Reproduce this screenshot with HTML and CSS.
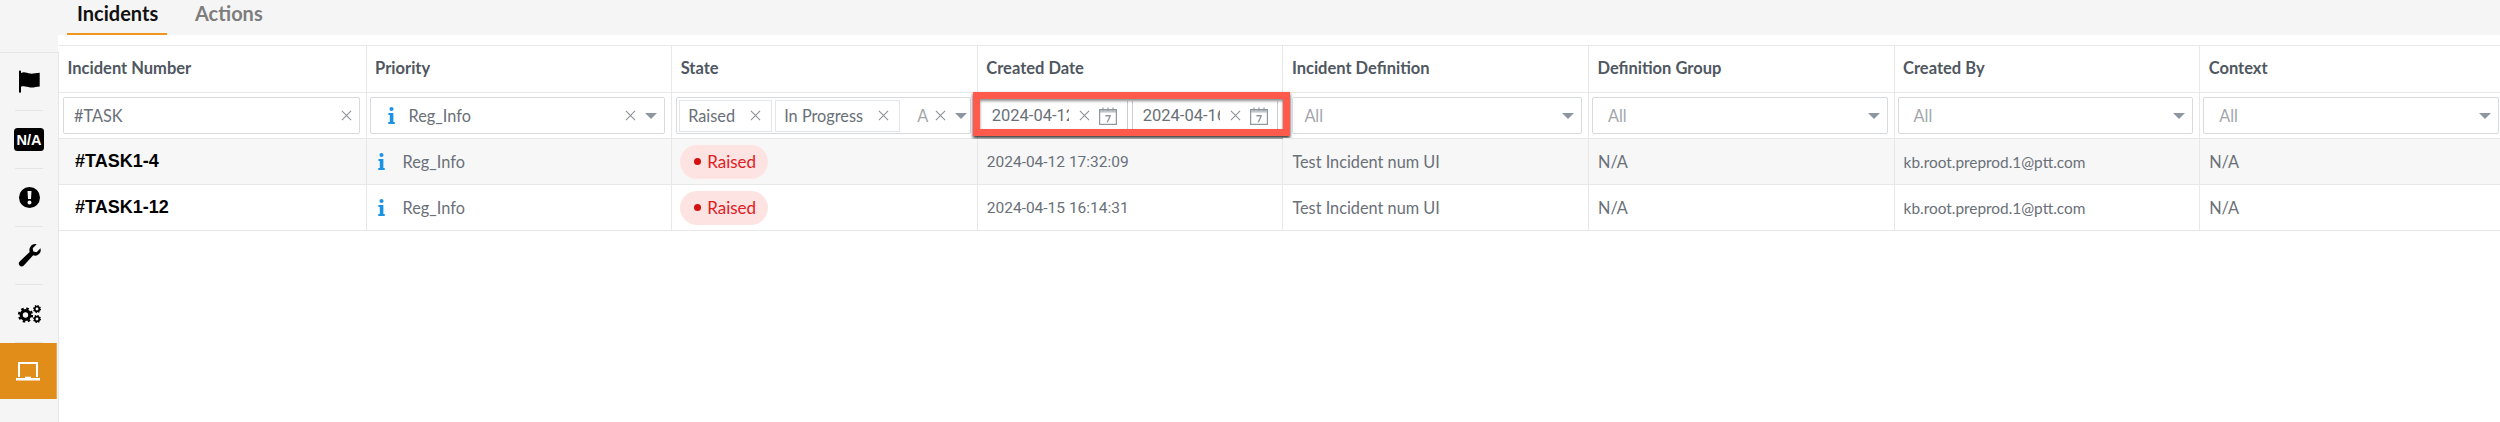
FILE: index.html
```html
<!DOCTYPE html>
<html lang="en">
<head>
<meta charset="utf-8">
<title>Incidents</title>
<link rel="stylesheet" href="styles.css">
</head>
<body>
<svg class="defs" width="0" height="0" aria-hidden="true">
  <symbol id="i-info" viewBox="0 0 8 20"><circle cx="4" cy="2.400" r="2.400"/><path d="M.4 7h5.800v10.600h1.600V20H.2v-2.400h1.800V9.400H.4z"/></symbol>
  <symbol id="i-x" viewBox="0 0 12 12"><path d="M1 1l10 10M11 1L1 11" fill="none" stroke="currentColor" stroke-width="1.200"/></symbol>
  <symbol id="i-cal" viewBox="0 0 18 18"><path d="M.6 2.600h16.800v14.800H.6z" fill="none" stroke="currentColor" stroke-width="1.200"/><path d="M.6 2.600h16.800v3H.6z" fill="currentColor" opacity=".55"/><path d="M4 .4v3.400M9 .4v3.400M14 .4v3.400" stroke="currentColor" stroke-width="1.200"/><path d="M6.400 8h5.400v1.200l-2.800 6H7.500l2.700-5.800H6.400z" fill="currentColor"/></symbol>
</svg>
<header class="tabs">
  <a class="tab tab-active">Incidents</a>
  <a class="tab">Actions</a>
</header>
<div class="workspace">
  <nav class="sidebar">
    <div class="side-item">
      <svg class="side-icon" width="23" height="23" viewBox="0 0 23 23"><path d="M1 1.500c0-1.200 2-1.200 2 0V3c3.500-1.600 6 .3 9 .6 3.400.3 6-.8 9.700-.8v13.600c-3.500.2-6 1.400-9.700 1-3.200-.4-5.700-1.900-9-.6v5.200c0 1-2 1-2 0z"/></svg>
    </div>
    <div class="side-sep"></div>
    <div class="side-item">
      <svg class="side-icon" width="30" height="23" viewBox="0 0 30 23"><rect width="30" height="23" rx="3.500"/><text x="15" y="16.800" class="na-text" text-anchor="middle">N/A</text></svg>
    </div>
    <div class="side-sep"></div>
    <div class="side-item">
      <svg class="side-icon" width="21" height="21" viewBox="0 0 21 21"><path fill-rule="evenodd" d="M10.500 0a10.500 10.500 0 1 1 0 21 10.500 10.500 0 0 1 0-21zM8.500 4l.5 8h3l.5-8zm2 9.500a2 2 0 1 0 0 4 2 2 0 0 0 0-4z"/></svg>
    </div>
    <div class="side-sep"></div>
    <div class="side-item">
      <svg class="side-icon" width="23" height="23" viewBox="0 0 23 23"><path d="M22.500 4.300c.7 2.700-.2 5.200-2.400 6.500-1.700 1-3.400 1-4.900.5L5.800 21.500c-1.100 1.200-3 1.300-4.200.1-1.200-1.200-1.100-3 .1-4.200l10-9.500c-.6-1.700-.4-3.500.6-5C13.600.6 16.200-.4 18.700.3l-4 4 .6 3.300 3.300.7z"/></svg>
    </div>
    <div class="side-sep"></div>
    <div class="side-item">
      <svg class="gears" width="23" height="18" viewBox="0 0 23 18">
        <circle cx="7.500" cy="10" r="4.300" stroke-width="3.200"/>
        <circle cx="7.500" cy="10" r="6.500" stroke-width="2.200" stroke-dasharray="2.550 2.550"/>
        <circle cx="19" cy="4" r="2.300" stroke-width="1.800"/>
        <circle cx="19" cy="4" r="3.300" stroke-width="1.400" stroke-dasharray="1.300 1.300"/>
        <circle cx="19" cy="14" r="2.300" stroke-width="1.800"/>
        <circle cx="19" cy="14" r="3.300" stroke-width="1.400" stroke-dasharray="1.300 1.300"/>
      </svg>
    </div>
    <div class="side-sep"></div>
    <div class="side-item side-active">
      <svg class="side-icon side-icon-light" width="24" height="19" viewBox="0 0 24 19"><path d="M3 1h18v14" fill="none" stroke="currentColor" stroke-width="2"/><path d="M3 0v15" stroke="currentColor" stroke-width="2"/><path d="M0 16h9v-1.300h6V16h9v2.400H0z"/></svg>
    </div>
  </nav>
  <main class="main">
    <div class="grid">
      <div class="cell head">Incident Number</div>
      <div class="cell head">Priority</div>
      <div class="cell head">State</div>
      <div class="cell head">Created Date</div>
      <div class="cell head">Incident Definition</div>
      <div class="cell head">Definition Group</div>
      <div class="cell head">Created By</div>
      <div class="cell head">Context</div>

      <div class="cell filter filter-first">
        <div class="field"><span class="value grow">#TASK</span><svg class="x"><use href="#i-x"/></svg></div>
      </div>
      <div class="cell filter">
        <div class="field">
          <svg class="info info-filter"><use href="#i-info"/></svg>
          <span class="value grow">Reg_Info</span>
          <svg class="x"><use href="#i-x"/></svg><span class="caret"></span>
        </div>
      </div>
      <div class="cell filter filter-first">
        <div class="field field-chips">
          <span class="chip chip-a"><span class="value">Raised</span><svg class="x"><use href="#i-x"/></svg></span>
          <span class="chip chip-b"><span class="value">In Progress</span><svg class="x"><use href="#i-x"/></svg></span>
          <span class="chip-rest">A</span>
          <svg class="x"><use href="#i-x"/></svg><span class="caret"></span>
        </div>
      </div>
      <div class="cell filter filter-date">
        <div class="date">
          <span class="date-text">2024-04-12</span><svg class="x"><use href="#i-x"/></svg><svg class="cal"><use href="#i-cal"/></svg>
        </div>
        <div class="date date-end">
          <span class="date-text">2024-04-16</span><svg class="x"><use href="#i-x"/></svg><svg class="cal"><use href="#i-cal"/></svg>
        </div>
        <div class="callout"></div>
      </div>
      <div class="cell filter filter-inset"><div class="field"><span class="hint grow">All</span><span class="caret"></span></div></div>
      <div class="cell filter"><div class="field"><span class="hint grow">All</span><span class="caret"></span></div></div>
      <div class="cell filter"><div class="field"><span class="hint grow">All</span><span class="caret"></span></div></div>
      <div class="cell filter"><div class="field"><span class="hint grow">All</span><span class="caret"></span></div></div>

      <div class="cell row alt num">#TASK1-4</div>
      <div class="cell row alt"><svg class="info"><use href="#i-info"/></svg><span>Reg_Info</span></div>
      <div class="cell row alt row-pill"><span class="pill"><span class="dot"></span>Raised</span></div>
      <div class="cell row alt stamp">2024-04-12 17:32:09</div>
      <div class="cell row alt">Test Incident num UI</div>
      <div class="cell row alt">N/A</div>
      <div class="cell row alt mail">kb.root.preprod.1@ptt.com</div>
      <div class="cell row alt">N/A</div>

      <div class="cell row num">#TASK1-12</div>
      <div class="cell row"><svg class="info"><use href="#i-info"/></svg><span>Reg_Info</span></div>
      <div class="cell row row-pill"><span class="pill"><span class="dot"></span>Raised</span></div>
      <div class="cell row stamp">2024-04-15 16:14:31</div>
      <div class="cell row">Test Incident num UI</div>
      <div class="cell row">N/A</div>
      <div class="cell row mail">kb.root.preprod.1@ptt.com</div>
      <div class="cell row">N/A</div>
    </div>
  </main>
</div>
</body>
</html>
```
FILE: styles.css
```css
* { box-sizing: border-box; }
html, body { margin: 0; height: 422px; overflow: hidden; background: #fff; }
body {
  font-family: Lato, "Open Sans", sans-serif;
  font-size: 16.300px;
  color: #6a7078;
  display: flex;
  flex-direction: column;
}
.defs { position: absolute; }

.tabs {
  height: 35px;
  flex: none;
  background: #f5f5f5;
  display: flex;
  padding-left: 67px;
  gap: 28px;
  font-size: 20px;
  font-weight: 700;
  color: #7d7d7d;
}
.tab { height: 35px; line-height: 26px; }
.tab-active { color: #111; border-bottom: 2px solid #ee961e; width: 100px; padding-left: 10px; }

.workspace { flex: 1; display: flex; min-height: 0; }
.sidebar {
  width: 59px;
  flex: none;
  margin-top: 17px;
  border-top: 1px solid #e6e6e6;
  border-right: 1px solid #e6e6e6;
  background: #f5f5f5;
  display: flex;
  flex-direction: column;
  position: relative;
}
.sidebar::before {
  content: "";
  position: absolute;
  left: 0; right: 0; top: -18px; height: 17px;
  background: #f5f5f5;
}
.side-item {
  height: 57px;
  display: flex;
  align-items: center;
  justify-content: center;
  flex: none;
}
.side-sep { height: 1px; width: 28px; margin-left: 15px; background: #e4e4e4; flex: none; }
.side-icon { fill: #000; display: block; }
.gears { display: block; fill: none; stroke: #000; }
.na-text { font: 700 14.500px "Liberation Sans", sans-serif; fill: #fff; }
.side-active { background: #e08d1a; width: 57px; height: 56px; border-right: 1px solid #e8a84f; }
.side-icon-light { fill: #fff; color: #fff; }

.main { flex: 1; min-width: 0; padding-top: 10px; overflow: hidden; }
.grid {
  display: grid;
  width: 2447px;
  grid-template-columns: 307.600px repeat(7, 305.600px);
  grid-template-rows: 47px 46px 46px 46px;
  border-top: 1px solid #e8e8e8;
}
.cell {
  border-right: 1px solid #e8e8e8;
  border-bottom: 1px solid #e8e8e8;
  display: flex;
  align-items: center;
  min-width: 0;
  position: relative;
}
.head { padding-left: 8.500px; font-weight: 700; color: #4f5761; font-size: 16.500px; padding-bottom: 2px; }
.filter { padding: 0 6px 0 3px; }
.filter-first { padding-left: 4px; }
.filter-inset { padding-left: 9px; }
.filter-inset .hint { padding-left: 1px; }
.row { padding-left: 9px; }
.row-pill { padding-left: 8px; }
.stamp { font-family: Roboto, sans-serif; font-size: 15.500px; }
.mail { font-size: 15.400px; }
.alt { background: #f7f7f7; }
.num { padding-left: 16px; font-weight: 700; color: #000; font-size: 18px; font-family: "Liberation Sans", sans-serif; }

.field {
  width: 100%;
  height: 37px;
  border: 1px solid #d8dbde;
  border-radius: 2px;
  background: #fff;
  display: flex;
  align-items: center;
  padding: 0 7px 0 10px;
}
.grow { flex: 1; min-width: 0; }
.value { color: #6a7078; }
.hint { color: #a2a6ab; padding-left: 5px; }
.x { width: 11px; height: 11px; color: #8d9298; flex: none; }
.caret {
  width: 0; height: 0; flex: none;
  border-left: 6px solid transparent;
  border-right: 6px solid transparent;
  border-top: 6px solid #8e97a1;
  margin-left: 9px;
}

.info { width: 7px; height: 17px; fill: #1a92e8; flex: none; margin-left: 2px; margin-right: 18px; }
.info-filter { margin-left: 7px; margin-right: 14px; }

.field-chips { padding: 0 7px 0 2px; }
.chip {
  height: 32px;
  display: flex;
  align-items: center;
  justify-content: space-between;
  border: 1px solid #e4e6e8;
  padding: 0 10px 0 8px;
  margin-right: 3px;
  flex: none;
}
.chip-a { width: 93px; }
.chip-b { width: 125px; }
.chip-rest { color: #a2a6ab; width: 32px; padding-left: 14px; overflow: hidden; flex: none; }

.filter-date { padding: 0 0 0 3px; }
.date {
  width: 147px;
  height: 29px;
  display: flex;
  align-items: center;
  padding-left: 11px;
  border-right: 1px solid #c9ccd0;
  background: #fff;
  flex: none;
  font-family: Roboto, sans-serif;
  font-size: 16.500px;
}
.date-end { width: 146px; margin-left: 4px; padding-left: 10px; border-left: 1px solid #c9ccd0; }
.date-text { width: 77px; overflow: hidden; white-space: nowrap; color: #6a7078; margin-right: 10px; flex: none; }
.date .x { margin-right: 9px; }
.cal { width: 18px; height: 18px; color: #8f979f; flex: none; }
.callout {
  position: absolute;
  left: -5px; top: -1px;
  width: 317px; height: 44px;
  border: 7px solid #ff5a4c;
  box-shadow: 0 2px 3px rgba(0,0,0,.8), inset 0 2px 3px rgba(0,0,0,.45);
  pointer-events: none;
}

.pill {
  height: 34px;
  width: 88px;
  border-radius: 17px;
  background: #fde4e3;
  color: #e0201f;
  display: flex;
  align-items: center;
  padding-left: 14px;
  font-size: 17px;
}
.dot { width: 7px; height: 7px; border-radius: 50%; background: #d40f0f; margin-right: 6px; flex: none; }
```
